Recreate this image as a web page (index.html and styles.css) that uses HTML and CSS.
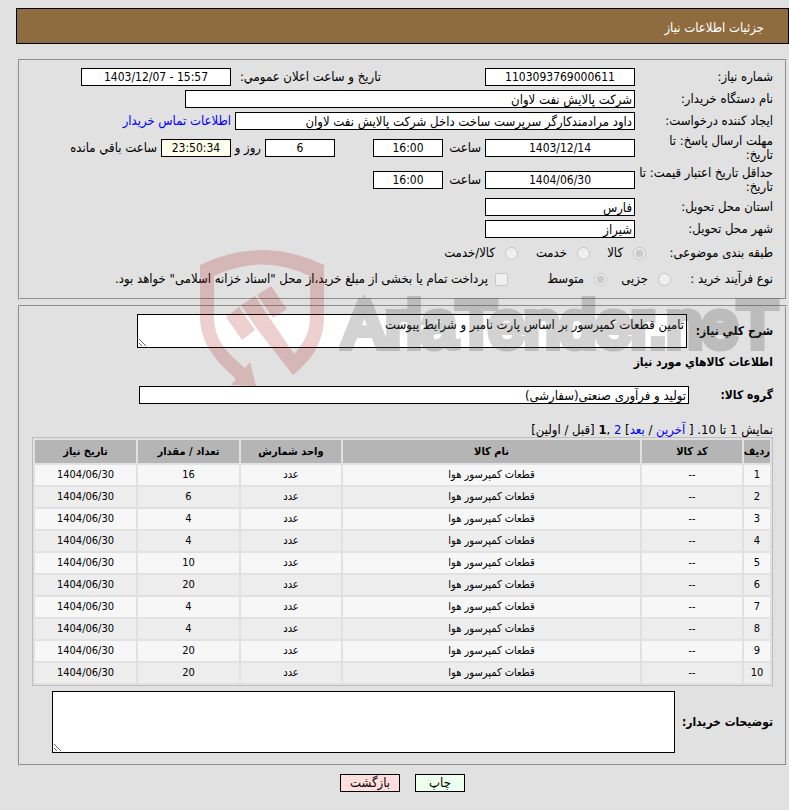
FILE: index.html
```html
<!DOCTYPE html>
<html lang="fa" dir="rtl">
<head>
    <meta charset="UTF-8">
    <meta name="viewport" content="width=device-width, initial-scale=1.0">
    <title>جزئیات اطلاعات نیاز</title>
    <link rel="stylesheet" href="styles.css">
</head>
<body>
    <h1 class="header">جزئیات اطلاعات نیاز</h1>

    <form class="page">
        <fieldset class="box">
            <div class="row">
                <label class="caption" for="needNo">شماره نیاز:</label>
                <input class="medium center" id="needNo" type="text" dir="ltr" value="1103093769000611" readonly>
                <label class="announce" for="announceDate">تاریخ و ساعت اعلان عمومي:</label>
                <input class="medium center" id="announceDate" type="text" dir="ltr" value="1403/12/07 - 15:57" readonly>
            </div>
            <div class="row">
                <label class="caption" for="buyer">نام دستگاه خریدار:</label>
                <input class="wide" id="buyer" type="text" value="شرکت پالایش نفت لاوان" readonly>
            </div>
            <div class="row">
                <label class="caption" for="creator">ایجاد کننده درخواست:</label>
                <input class="creator" id="creator" type="text" value="داود مرادمندکارگر سرپرست ساخت داخل شرکت پالایش نفت لاوان" readonly>
                <a class="contact" href="#">اطلاعات تماس خریدار</a>
            </div>
            <div class="row tall">
                <label class="caption" for="replyDate">مهلت ارسال پاسخ: تا<br>تاریخ:</label>
                <input class="medium center" id="replyDate" type="text" dir="ltr" value="1403/12/14" readonly>
                <label class="hour" for="replyHour">ساعت</label>
                <input class="small center" id="replyHour" type="text" dir="ltr" value="16:00" readonly>
                <div class="remaining">
                    <input class="small center" id="days" type="text" dir="ltr" value="6" readonly>
                    <label class="day" for="days">روز و</label>
                    <input class="small center clock" id="clock" type="text" dir="ltr" value="23:50:34" readonly>
                    <label class="left" for="clock">ساعت باقي مانده</label>
                </div>
            </div>
            <div class="row tall">
                <label class="caption" for="priceDate">حداقل تاریخ اعتبار قیمت: تا<br>تاریخ:</label>
                <input class="medium center" id="priceDate" type="text" dir="ltr" value="1404/06/30" readonly>
                <label class="hour" for="priceHour">ساعت</label>
                <input class="small center" id="priceHour" type="text" dir="ltr" value="16:00" readonly>
            </div>
            <div class="row">
                <label class="caption" for="province">استان محل تحویل:</label>
                <input class="medium" id="province" type="text" value="فارس" readonly>
            </div>
            <div class="row">
                <label class="caption" for="city">شهر محل تحویل:</label>
                <input class="medium" id="city" type="text" value="شیراز" readonly>
            </div>
            <div class="row options subject">
                <span class="caption">طبقه بندی موضوعی:</span>
                <label><input type="radio" name="subject" checked disabled>کالا</label>
                <label><input type="radio" name="subject" disabled>خدمت</label>
                <label><input type="radio" name="subject" disabled>کالا/خدمت</label>
            </div>
            <div class="row options process">
                <span class="caption">نوع فرآیند خرید :</span>
                <label><input type="radio" name="process" disabled>جزیی</label>
                <label><input type="radio" name="process" checked disabled>متوسط</label>
                <label><input type="checkbox" disabled>پرداخت تمام یا بخشی از مبلغ خرید،از محل "اسناد خزانه اسلامی" خواهد بود.</label>
            </div>
        </fieldset>

        <fieldset class="box goods">
            <div class="area-row">
                <label class="summary-label" for="summary">شرح كلي نياز:</label>
                <textarea class="summary" id="summary" readonly>تامین قطعات کمپرسور بر اساس پارت نامبر و شرایط پیوست</textarea>
            </div>
            <h2>اطلاعات كالاهاي مورد نياز</h2>
            <div class="area-row">
                <label class="group-label" for="group">گروه کالا:</label>
                <input class="group" id="group" type="text" value="تولید و فرآوری صنعتی(سفارشی)" readonly>
            </div>
            <div class="paging">نمایش 1 تا 10. [ <a href="#">آخرین</a> / <a href="#">بعد</a>] <a href="#">2</a> ,<b>1</b> [قبل / اولین]</div>
            <table>
                <colgroup>
                    <col class="col-row">
                    <col class="col-code">
                    <col class="col-name">
                    <col class="col-unit">
                    <col class="col-count">
                    <col class="col-date">
                </colgroup>
                <thead>
                    <tr><th>ردیف</th><th>کد کالا</th><th>نام کالا</th><th>واحد شمارش</th><th>تعداد / مقدار</th><th>تاریخ نیاز</th></tr>
                </thead>
                <tbody>
                    <tr><td>1</td><td>--</td><td>قطعات کمپرسور هوا</td><td>عدد</td><td>16</td><td dir="ltr">1404/06/30</td></tr>
                    <tr><td>2</td><td>--</td><td>قطعات کمپرسور هوا</td><td>عدد</td><td>6</td><td dir="ltr">1404/06/30</td></tr>
                    <tr><td>3</td><td>--</td><td>قطعات کمپرسور هوا</td><td>عدد</td><td>4</td><td dir="ltr">1404/06/30</td></tr>
                    <tr><td>4</td><td>--</td><td>قطعات کمپرسور هوا</td><td>عدد</td><td>4</td><td dir="ltr">1404/06/30</td></tr>
                    <tr><td>5</td><td>--</td><td>قطعات کمپرسور هوا</td><td>عدد</td><td>10</td><td dir="ltr">1404/06/30</td></tr>
                    <tr><td>6</td><td>--</td><td>قطعات کمپرسور هوا</td><td>عدد</td><td>20</td><td dir="ltr">1404/06/30</td></tr>
                    <tr><td>7</td><td>--</td><td>قطعات کمپرسور هوا</td><td>عدد</td><td>4</td><td dir="ltr">1404/06/30</td></tr>
                    <tr><td>8</td><td>--</td><td>قطعات کمپرسور هوا</td><td>عدد</td><td>4</td><td dir="ltr">1404/06/30</td></tr>
                    <tr><td>9</td><td>--</td><td>قطعات کمپرسور هوا</td><td>عدد</td><td>20</td><td dir="ltr">1404/06/30</td></tr>
                    <tr><td>10</td><td>--</td><td>قطعات کمپرسور هوا</td><td>عدد</td><td>20</td><td dir="ltr">1404/06/30</td></tr>
                </tbody>
            </table>
            <div class="area-row">
                <label class="notes-label" for="notes">توضیحات خریدار:</label>
                <textarea class="notes" id="notes" readonly></textarea>
            </div>
        </fieldset>

        <div class="buttons">
            <button class="print" type="button">چاپ</button>
            <button class="back" type="button">بازگشت</button>
        </div>
    </form>

    <div class="watermark" dir="ltr">
        <svg class="shield" width="126" height="138" viewBox="0 0 126 138">
            <path d="M0 15Q62-15 124 15V66C124 92 112 110 93 125L57 79L41 55L55 46L71 70L94 104C104 92 110 84 110 66V26Q62 3 14 26V66C14 90 26 102 45 118L50 112L56 136L31 135L36 129C12 108 0 90 0 66Z"/>
            <path d="M26 67L39 57L55 80L42 90Z"/>
            <path d="M57 45L71 36L87 59L73 68Z"/>
        </svg>
        <span class="brand">AriaTender.neT</span>
    </div>
</body>
</html>
```
FILE: styles.css
```css
* {
    box-sizing: border-box;
}

body {
    position: relative;
    margin: 0;
    padding: 8px 0 16px 16px;
    overflow-x: hidden;
    background-color: #e1e1e1;
    color: #000;
    font-family: "DejaVu Sans Condensed", "DejaVu Sans", sans-serif;
    font-size: 13px;
    line-height: 14px;
}

a {
    color: #00f;
    text-decoration: none;
}

.header {
    margin: 0 0 15px;
    padding: 12px 24px 8px;
    border: 1px solid #000;
    background-color: #8f6c40;
    color: #fff;
    font-size: 13px;
    font-weight: normal;
    line-height: 14px;
}

.page {
    margin: 0 2px;
}

.box {
    min-width: 0;
    margin: 0 0 5px;
    padding: 5px 12px 6px;
    border: 2px groove #e1e1e1;
}

.row {
    display: flex;
    align-items: center;
    height: 22px;
    white-space: nowrap;
}

.row.tall {
    height: 32px;
}

.caption {
    flex: none;
    width: 138px;
}

input[type="text"],
textarea {
    flex: none;
    margin: 0;
    border: 1px solid #000;
    border-radius: 0;
    outline: none;
    background-color: #fff;
    color: #000;
    font-family: inherit;
    font-size: 13px;
}

input[type="text"] {
    height: 18px;
    padding: 0 2px;
}

input[type="text"].center {
    text-align: center;
    font-size: 12px;
}

.medium {
    width: 150px;
}

.wide {
    width: 450px;
}

.creator {
    width: 400px;
}

.small {
    width: 70px;
}

.announce {
    width: 150px;
    margin-right: 104px;
}

.contact,
.left {
    margin-right: 4px;
}

.hour {
    width: 42px;
    padding-right: 4px;
}

.remaining {
    display: flex;
    align-items: center;
    margin-right: 38px;
}

.day {
    width: 34px;
    padding-right: 4px;
}

input[type="text"].clock {
    background-color: #ffffec;
}

.row.options {
    height: 26px;
}

.options label {
    display: flex;
    flex: none;
    align-items: center;
    gap: 10px;
}

.options input {
    flex: none;
    width: 13px;
    height: 13px;
    margin: 0;
}

.subject .caption {
    width: 127px;
}

.subject label:nth-of-type(1) {
    width: 56px;
}

.subject label:nth-of-type(2) {
    width: 72px;
}

.process .caption {
    width: 102px;
}

.process label:nth-of-type(1) {
    width: 64px;
}

.process label:nth-of-type(2) {
    width: 99px;
}

.process label:nth-of-type(3) {
    gap: 7px;
}

.goods {
    margin-bottom: 8px;
    padding: 7px 12px 11px;
}

.area-row {
    display: flex;
    align-items: center;
    font-weight: bold;
}

.area-row label {
    flex: none;
    font-size: 12px;
    white-space: nowrap;
}

h2 {
    margin: 7px 0 17px;
    font-size: 12px;
    line-height: 14px;
}

textarea {
    display: block;
    padding: 2px;
    line-height: 16px;
}

.summary-label {
    width: 86px;
}

.group-label {
    width: 84px;
}

.notes-label {
    width: 98px;
}

.summary,
.group {
    width: 550px;
}

.summary {
    height: 34px;
}

.paging {
    margin-top: 18px;
    line-height: 15px;
}

table {
    width: 100%;
    margin-bottom: 5px;
    border: 1px solid #bdbdbd;
    border-spacing: 2px;
    table-layout: fixed;
    text-align: center;
    font-size: 11px;
}

.col-row {
    width: 26px;
}

.col-code,
.col-unit {
    width: 100px;
}

.col-count,
.col-date {
    width: 101px;
}

th {
    height: 23px;
    padding: 0;
    background-color: #b5b5b5;
    white-space: nowrap;
}

td {
    height: 20px;
    padding: 0;
    background-color: #f7f7f7;
}

tr:nth-child(even) td {
    background-color: #ededed;
}

.notes {
    width: 623px;
    height: 62px;
}

.buttons {
    display: flex;
    justify-content: center;
    gap: 15px;
}

button {
    height: 18px;
    padding: 0;
    border: 1px solid #000;
    color: #000;
    font-family: inherit;
    font-size: 13px;
    line-height: 14px;
}

.print {
    width: 50px;
    background-color: #edffed;
}

.back {
    width: 60px;
    background-color: #ffdede;
}

/* site stamp lying over the form */
.watermark {
    display: flex;
    align-items: flex-start;
    gap: 17px;
    position: absolute;
    top: 250px;
    left: 200px;
    pointer-events: none;
}

.shield {
    flex: none;
    fill: #aa1414;
    opacity: 0.2;
}

.brand {
    color: #464646;
    font-family: "Liberation Sans", Arial, sans-serif;
    font-size: 64px;
    line-height: 150px;
    opacity: 0.23;
    -webkit-text-stroke: 8px #464646;
    stroke-linejoin: round;
}
```
